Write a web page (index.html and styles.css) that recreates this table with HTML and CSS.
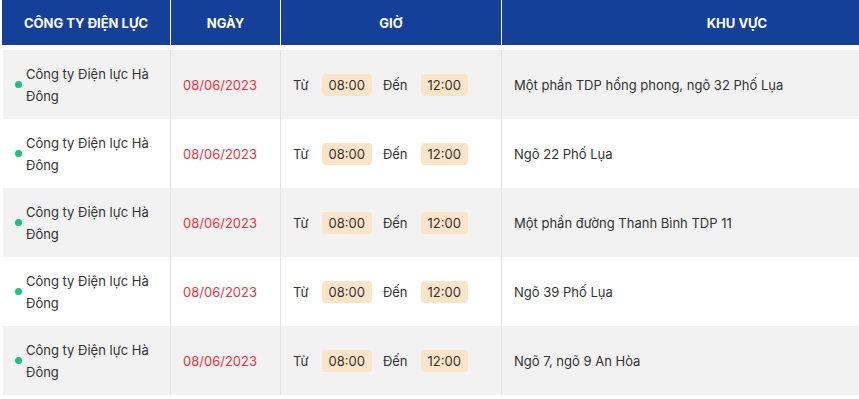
FILE: index.html
```html
<!DOCTYPE html>
<html lang="vi">
<head>
<meta charset="utf-8">
<link rel="stylesheet" href="styles.css">
</head>
<body>
<div class="wrap">
<table class="tbl">
  <thead>
    <tr>
      <th class="c1">CÔNG TY ĐIỆN LỰC</th>
      <th class="c2">NGÀY</th>
      <th class="c3">GIỜ</th>
      <th class="c4">KHU VỰC</th>
    </tr>
  </thead>
  <tbody>
    <tr class="spacer"><td colspan="4"></td></tr>
    <tr class="odd">
      <td class="comp"><div class="cw"><span class="dot"></span><span class="name">Công ty Điện lực Hà Đông</span></div></td>
      <td class="date">08/06/2023</td>
      <td class="time"><span>Từ</span><span class="badge b1">08:00</span><span>Đến</span><span class="badge b2">12:00</span></td>
      <td class="area">Một phần TDP hồng phong, ngõ 32 Phố Lụa</td>
    </tr>
    <tr>
      <td class="comp"><div class="cw"><span class="dot"></span><span class="name">Công ty Điện lực Hà Đông</span></div></td>
      <td class="date">08/06/2023</td>
      <td class="time"><span>Từ</span><span class="badge b1">08:00</span><span>Đến</span><span class="badge b2">12:00</span></td>
      <td class="area">Ngõ 22 Phố Lụa</td>
    </tr>
    <tr class="odd">
      <td class="comp"><div class="cw"><span class="dot"></span><span class="name">Công ty Điện lực Hà Đông</span></div></td>
      <td class="date">08/06/2023</td>
      <td class="time"><span>Từ</span><span class="badge b1">08:00</span><span>Đến</span><span class="badge b2">12:00</span></td>
      <td class="area">Một phần đường Thanh Bình TDP 11</td>
    </tr>
    <tr>
      <td class="comp"><div class="cw"><span class="dot"></span><span class="name">Công ty Điện lực Hà Đông</span></div></td>
      <td class="date">08/06/2023</td>
      <td class="time"><span>Từ</span><span class="badge b1">08:00</span><span>Đến</span><span class="badge b2">12:00</span></td>
      <td class="area">Ngõ 39 Phố Lụa</td>
    </tr>
    <tr class="odd">
      <td class="comp"><div class="cw"><span class="dot"></span><span class="name">Công ty Điện lực Hà Đông</span></div></td>
      <td class="date">08/06/2023</td>
      <td class="time"><span>Từ</span><span class="badge b1">08:00</span><span>Đến</span><span class="badge b2">12:00</span></td>
      <td class="area">Ngõ 7, ngõ 9 An Hòa</td>
    </tr>
  </tbody>
</table>
</div>
</body>
</html>
```
FILE: styles.css
```css
html, body {
  margin: 0;
  padding: 0;
  background: #fff;
  overflow: hidden;
}
body {
  font-family: Inter, "Noto Sans", sans-serif;
  color: #333;
  font-size: 13px;
}
.wrap {
  width: 972px;
}
.tbl {
  width: 972px;
  border-collapse: collapse;
  table-layout: fixed;
}
.c1 { width: 168px; }
.c2 { width: 109px; }
.c3 { width: 220px; }
.c4 { width: auto; }
th {
  background: #15409a;
  color: #fff;
  font-weight: 700;
  font-size: 13px;
  height: 45px;
  padding: 0;
  text-align: center;
  border-left: 1px solid #fff;
}
tbody tr { height: 69px; }
tbody tr.spacer { height: 5px; }
.spacer td {
  height: 5px;
  padding: 0;
  background: #fff;
  border: none;
}
tbody tr.odd td { background: #f2f2f2; }
td {
  padding: 0 12px;
  vertical-align: middle;
  border-left: 1px solid #e2e2e2;
  line-height: 22px;
}
td.comp {
  border-left: 3px solid #fff;
  padding-left: 12px;
  padding-right: 8px;
}
.cw {
  display: flex;
  align-items: center;
}
.dot {
  flex: none;
  width: 7px;
  height: 7px;
  border-radius: 50%;
  background: #16c47f;
  margin-right: 4px;
}
.date { color: #ef3340; }
.time span { display: inline-block; }
.badge {
  background: #fbe4c7;
  border-radius: 4px;
  padding: 0 7px;
  height: 22px;
  line-height: 22px;
}
.b1 { margin-left: 13px; margin-right: 11px; }
.b2 { margin-left: 13px; }
```
